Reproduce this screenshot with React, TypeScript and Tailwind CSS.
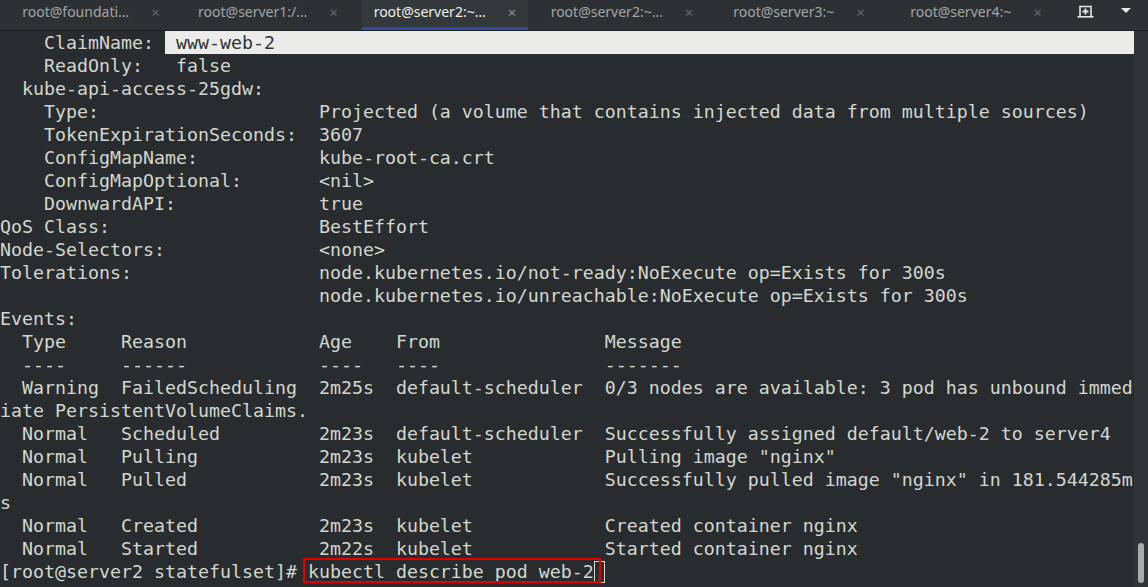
import React from 'react';

const tabs = [
  { label: 'root@foundati…', active: false },
  { label: 'root@server1:/…', active: false },
  { label: 'root@server2:~…', active: true },
  { label: 'root@server2:~…', active: false },
  { label: 'root@server3:~', active: false },
  { label: 'root@server4:~', active: false },
];

const lines = [
  '    ReadOnly:   false',
  '  kube-api-access-25gdw:',
  '    Type:                    Projected (a volume that contains injected data from multiple sources)',
  '    TokenExpirationSeconds:  3607',
  '    ConfigMapName:           kube-root-ca.crt',
  '    ConfigMapOptional:       <nil>',
  '    DownwardAPI:             true',
  'QoS Class:                   BestEffort',
  'Node-Selectors:              <none>',
  'Tolerations:                 node.kubernetes.io/not-ready:NoExecute op=Exists for 300s',
  '                             node.kubernetes.io/unreachable:NoExecute op=Exists for 300s',
  'Events:',
  '  Type     Reason            Age    From               Message',
  '  ----     ------            ----   ----               -------',
  '  Warning  FailedScheduling  2m25s  default-scheduler  0/3 nodes are available: 3 pod has unbound immed',
  'iate PersistentVolumeClaims.',
  '  Normal   Scheduled         2m23s  default-scheduler  Successfully assigned default/web-2 to server4',
  '  Normal   Pulling           2m23s  kubelet            Pulling image "nginx"',
  '  Normal   Pulled            2m23s  kubelet            Successfully pulled image "nginx" in 181.544285m',
  's',
  '  Normal   Created           2m23s  kubelet            Created container nginx',
  '  Normal   Started           2m22s  kubelet            Started container nginx',
];

const App: React.FC = () => {
  return (
    <div className="w-[1148px] h-[587px] bg-[#282c2e] flex flex-col overflow-hidden">
      {/* tab bar */}
      <div className="h-[31px] shrink-0 flex bg-[#2d3133] border-b border-[#1d2021] font-['Noto_Sans',sans-serif] text-[14px]">
        <div className="flex gap-[11px] pl-[8px]">
          {tabs.map((t, i) => (
            <div
              key={i}
              className={
                t.active
                  ? 'w-[166px] flex items-center justify-center gap-[22px] bg-[#33393b] border-b-[3px] border-[#2f4ea0] pb-[3px] text-[#eeeeec]'
                  : 'w-[166px] flex items-center justify-center gap-[22px] border-b-[3px] border-transparent pb-[3px] text-[#a3a6a6]'
              }
            >
              <span className="leading-none">{t.label}</span>
              <span className={t.active ? 'text-[#8c9091] text-[15px] leading-none' : 'text-[#62676a] text-[15px] leading-none'}>×</span>
            </div>
          ))}
        </div>
        <div className="flex-1 flex items-start justify-end pr-[17px] gap-[27px]">
          <svg width="17" height="13" viewBox="0 0 17 13" className="mt-[5px] text-[#e6e6e4]">
            <path d="M3 11.5V1.5h11v10" fill="none" stroke="currentColor" strokeWidth="1.6" />
            <path d="M0.5 11.8h16" stroke="currentColor" strokeWidth="1.6" />
            <path d="M8.5 3.5v6M5.5 6.5h6" stroke="currentColor" strokeWidth="1.8" />
          </svg>
          <svg width="10" height="5" viewBox="0 0 10 5" className="mt-[8px]">
            <path d="M0 0h10L5 5z" fill="#e6e6e4" />
          </svg>
        </div>
      </div>

      {/* terminal */}
      <div className="flex-1 flex min-h-0">
        <div className="w-[1134px] relative font-['DejaVu_Sans_Mono',monospace] text-[18.27px] leading-[23px] text-[#d3d7cf]">
          <div className="flex whitespace-pre h-[23px]">
            <span>{'    ClaimName:  '.slice(0, 15)}</span>
            <span className="flex-1 bg-[#ebebea] text-[#2e3436]">{' www-web-2'}</span>
          </div>
          {lines.map((l, i) => (
            <div key={i} className="whitespace-pre h-[23px]">
              {l}
            </div>
          ))}
          <div className="whitespace-pre h-[23px] flex">
            <span>{'[root@server2 statefulset]# kubectl describe pod web-2'}</span>
            <span className="w-[11px] h-[22px] mt-[1px] border border-[#d3d7cf]" />
          </div>
          {/* annotation box */}
          <div className="absolute left-[303px] top-[527px] w-[298px] h-[25px] border-2 border-[#e50000]" />
        </div>
        <div className="flex-1 bg-[#2f3436] flex flex-col justify-end items-center pb-[4px]">
          <div className="w-[6px] h-[40px] rounded-full bg-[#a9abaa]" />
        </div>
      </div>
    </div>
  );
};

export default App;
